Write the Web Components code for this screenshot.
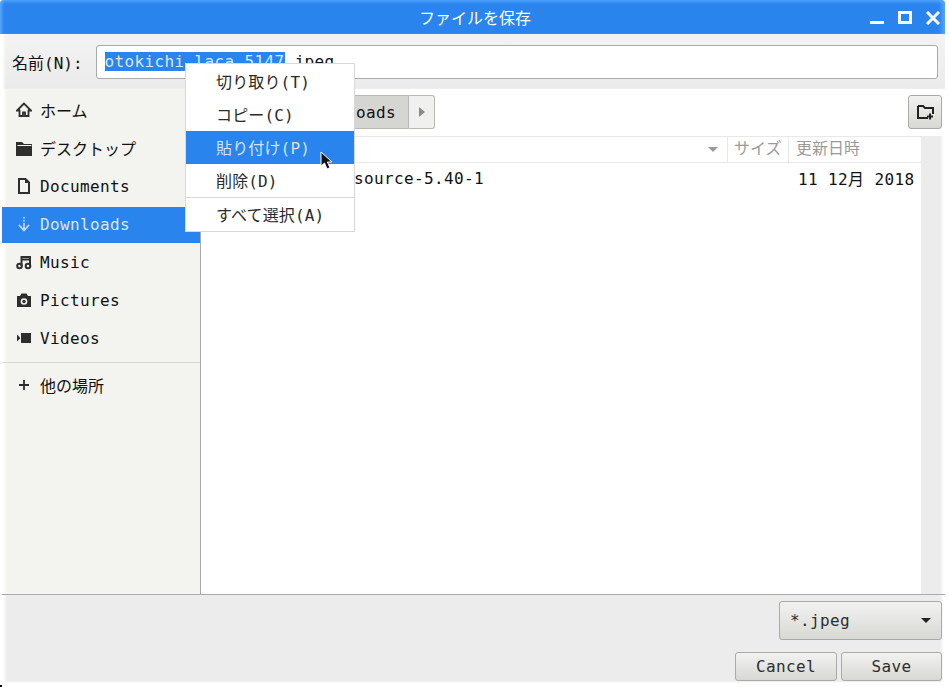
<!doctype html>
<html>
<head>
<meta charset="utf-8">
<style>
  html, body { margin: 0; height: 100%; background: #fff; overflow: hidden; }
  body {
    font-family: "DejaVu Sans Mono", "Noto Sans CJK JP", monospace;
    font-size: 16px;
    color: #111;
  }
  .corner { position: absolute; left: 0; top: 685px; width: 2px; height: 2px; background: #000; }
</style>
</head>
<body>
<save-dialog></save-dialog>
<div class="corner"></div>
<script>
const ICONS = {
  home: '<path d="M8 1.500 1 8.500h2.500V14H7v-3.500h2V14h3.500V8.500H15z" fill="none" stroke="currentColor" stroke-width="1.800"/>',
  folder: '<path d="M0 2h6l2 2h8v12H0z" fill="currentColor"/><path d="M1.500 5.500h14" stroke="#f3f3ef" stroke-width="1"/>',
  doc: '<path d="M3 1h6.500L13 4.500V15H3z" fill="none" stroke="currentColor" stroke-width="2"/><path d="M9 1v4h4" fill="currentColor"/>',
  down: '<path d="M8 1v1.500M8 4v1.500M8 7v6M3 9l5 5.500L13 9" fill="none" stroke="currentColor" stroke-width="1.600"/>',
  music: '<circle cx="3.500" cy="12" r="2.300" fill="none" stroke="currentColor" stroke-width="2"/><circle cx="12" cy="12" r="2.300" fill="none" stroke="currentColor" stroke-width="2"/><path d="M5.500 12V3h8.500v9M5.500 5.500H14" fill="none" stroke="currentColor" stroke-width="2"/>',
  camera: '<path d="M1 4h3l1.500-2.500h5L12 4h3v11H1z" fill="currentColor"/><circle cx="8" cy="9.500" r="3.300" fill="#f3f3ef"/><circle cx="8" cy="9.500" r="1.700" fill="currentColor"/>',
  video: '<path d="M5 3h10v10H5z" fill="currentColor"/><path d="M1 4.500 4 7.500v1L1 11.500z" fill="currentColor"/>',
  plus: '<path d="M8 3v10M3 8h10" fill="none" stroke="currentColor" stroke-width="1.800"/>'
};

class SideItem extends HTMLElement {
  constructor() {
    super();
    this.attachShadow({ mode: "open" });
    this.shadowRoot.innerHTML = `
      <style>
        :host { display: flex; align-items: center; height: 38px; padding-left: 14px; gap: 8px; color: #111; }
        :host([active]) { background: linear-gradient(180deg, transparent 2px, #2a84ee 2px); color: #d6e8fc; }
        svg { width: 16px; height: 16px; flex: none; color: #2e2e2e; }
        :host([active]) svg { color: #c9e0fb; }
      </style>
      <svg viewBox="0 0 16 16">${ICONS[this.getAttribute("icon")] || ""}</svg>
      <slot></slot>
    `;
  }
}
customElements.define("side-item", SideItem);

class SideBar extends HTMLElement {
  constructor() {
    super();
    this.attachShadow({ mode: "open" });
    this.shadowRoot.innerHTML = `
      <style>
        :host { display: block; width: 198px; flex: none; padding-top: 2px; background: #f3f3ef; border-right: 1px solid #a9a9a9; box-shadow: inset 4px 0 3px -1px #fff; }
        hr { border: 0; border-top: 1px solid #d8d8d5; margin: 5px 0 3px; }
        .l { letter-spacing: 0.37px; }
      </style>
      <side-item icon="home">ホーム</side-item>
      <side-item icon="folder">デスクトップ</side-item>
      <side-item icon="doc" class="l">Documents</side-item>
      <side-item icon="down" class="l" active>Downloads</side-item>
      <side-item icon="music" class="l">Music</side-item>
      <side-item icon="camera" class="l">Pictures</side-item>
      <side-item icon="video" class="l">Videos</side-item>
      <hr>
      <side-item icon="plus">他の場所</side-item>
    `;
  }
}
customElements.define("side-bar", SideBar);

class TitleBar extends HTMLElement {
  constructor() {
    super();
    this.attachShadow({ mode: "open" });
    this.shadowRoot.innerHTML = `
      <style>
        :host {
          display: grid; grid-template-columns: 1fr auto 1fr; align-items: center;
          height: 34px; margin-left: -2px; padding-left: 5px; color: #fff; font-family: "Noto Sans CJK JP", sans-serif; font-size: 16px;
          background: linear-gradient(180deg, #4aa0fa 0, #2a84ee 4px); border-radius: 4px 4px 0 0;
          box-shadow: inset -5px 0 4px -2px #5aa8f8, inset 4px 0 3px -2px #5aa8f8;
        }
        .title { grid-column: 2; }
        .ctl { grid-column: 3; justify-self: end; display: flex; gap: 14px; padding: 2px 5px 0 0; }
        svg { width: 14px; height: 14px; display: block; }
      </style>
      <span class="title"><slot></slot></span>
      <div class="ctl">
        <svg viewBox="0 0 14 14"><path d="M0 11.500h14" stroke="#fff" stroke-width="3"/></svg>
        <svg viewBox="0 0 14 14"><path d="M1.500 1.500h11v10h-11z" fill="none" stroke="#fff" stroke-width="3"/></svg>
        <svg viewBox="0 0 14 14"><path d="M1 1l12 12M13 1 1 13" stroke="#fff" stroke-width="3"/></svg>
      </div>
    `;
  }
}
customElements.define("title-bar", TitleBar);

class NameRow extends HTMLElement {
  constructor() {
    super();
    this.attachShadow({ mode: "open" });
    this.shadowRoot.innerHTML = `
      <style>
        :host { display: flex; align-items: center; gap: 13px; height: 55px; padding: 0 7px 0 10px; background: linear-gradient(180deg, #f3f3f3, #ebebeb); letter-spacing: 0.37px; box-shadow: inset 3px 0 3px -1px #fff; }
        .label { letter-spacing: 0; }
        .entry { flex: 1; height: 34px; box-sizing: border-box; display: flex; align-items: center; padding-left: 8px; background: #fff; border: 1px solid #aaa; border-radius: 3px; }
        .sel { background: #2a84ee; color: #d6e8fc; line-height: 19px; }
      </style>
      <span class="label">名前(N):</span>
      <div class="entry"><span class="sel">otokichi_laca_5147</span>.jpeg</div>
    `;
  }
}
customElements.define("name-row", NameRow);

class PathBar extends HTMLElement {
  constructor() {
    super();
    this.attachShadow({ mode: "open" });
    this.shadowRoot.innerHTML = `
      <style>
        :host { display: flex; align-items: flex-start; justify-content: space-between; height: 47px; box-sizing: border-box; padding: 6px 3px 0 0; letter-spacing: 0.37px; }
        .crumbs { display: flex; height: 34px; }
        .seg { width: 208px; box-sizing: border-box; display: flex; align-items: center; justify-content: flex-end; padding-right: 12px; background: #d5d5d1; border: 1px solid #b8b8b4; border-radius: 3px 0 0 3px; }
        .arrow { width: 26px; box-sizing: border-box; display: flex; align-items: center; justify-content: center; border: 1px solid #b8b8b4; border-left: 0; border-radius: 0 3px 3px 0; background: #f0f0ee; }
        .arrow i { border-left: 6px solid #8a8a8a; border-top: 5px solid transparent; border-bottom: 5px solid transparent; }
        .new { width: 34px; height: 34px; box-sizing: border-box; display: flex; align-items: center; justify-content: center; border: 1px solid #aaa; border-radius: 3px; background: linear-gradient(180deg, #f2f2f0, #d8d8d5); }
        svg { width: 17px; height: 17px; }
      </style>
      <div class="crumbs"><div class="seg">Downloads</div><div class="arrow"><i></i></div></div>
      <div class="new"><svg viewBox="0 0 17 17"><path d="M1 2h5l2 2h8v6M11 14H1V2" fill="none" stroke="#222" stroke-width="2"/><path d="M13 9.500v6M10 12.500h6" stroke="#222" stroke-width="2"/></svg></div>
    `;
  }
}
customElements.define("path-bar", PathBar);

class FileList extends HTMLElement {
  constructor() {
    super();
    this.attachShadow({ mode: "open" });
    this.shadowRoot.innerHTML = `
      <style>
        :host { display: flex; flex: 1; min-height: 0; background: #fff; letter-spacing: 0.37px; }
        .list { flex: 1; min-width: 0; }
        .gutter { width: 24px; flex: none; background: #ececec; box-shadow: inset -5px 0 3px -2px #fff; }
        .head, .row { display: grid; grid-template-columns: 1fr 61px 133px; }
        .head { height: 27px; box-sizing: border-box; border-top: 1px solid #e8e8e8; border-bottom: 1px solid #e8e8e8; color: #9a9a9a; letter-spacing: 0; line-height: 24px; }
        .head > div { border-left: 1px solid #e8e8e8; padding-left: 6px; }
        .head > div + div + div { padding-left: 7px; }
        .head > div:first-child { border-left: 0; display: flex; justify-content: flex-end; align-items: center; padding-right: 9px; }
        .head i { border-top: 5px solid #9a9a9a; border-left: 5px solid transparent; border-right: 5px solid transparent; }
        .row { height: 30px; align-items: center; }
        .name { padding-left: 153px; }
        .date { padding-left: 10px; white-space: pre; grid-column: 3; }
      </style>
      <div class="list">
        <div class="head"><div><i></i></div><div>サイズ</div><div>更新日時</div></div>
        <div class="row"><div class="name">source-5.40-1</div><div></div><div class="date">11 12月 2018</div></div>
      </div>
      <div class="gutter"></div>
    `;
  }
}
customElements.define("file-list", FileList);

class DlgButton extends HTMLElement {
  constructor() {
    super();
    this.attachShadow({ mode: "open" });
    this.shadowRoot.innerHTML = `
      <style>
        :host { display: flex; align-items: center; justify-content: center; box-sizing: border-box; height: 29px; width: 102px; color: #2e2e2e; border: 1px solid #aaa; border-radius: 3px; background: linear-gradient(180deg, #f2f2f0, #d8d8d5); letter-spacing: 0.37px; }
      </style>
      <slot></slot>
    `;
  }
}
customElements.define("dlg-button", DlgButton);

class FooterBar extends HTMLElement {
  constructor() {
    super();
    this.attachShadow({ mode: "open" });
    this.shadowRoot.innerHTML = `
      <style>
        :host { display: flex; flex-direction: column; align-items: flex-end; gap: 12px; height: 89px; box-sizing: border-box; padding: 6px 3px 0 0; background: #ececec; border-top: 1px solid #a9a9a9; box-shadow: inset 4px 0 3px -1px #fff, inset -5px 0 3px -2px #fff, inset 0 -2px 2px -1px #fff; }
        .combo { width: 163px; height: 39px; box-sizing: border-box; display: flex; align-items: center; justify-content: space-between; padding: 0 10px; border: 1px solid #aaa; border-radius: 3px; background: linear-gradient(180deg, #f2f2f0, #d8d8d5); color: #2e2e2e; letter-spacing: 0.37px; }
        .combo i { border-top: 5px solid #222; border-left: 5px solid transparent; border-right: 5px solid transparent; }
        .btns { display: flex; gap: 4px; }
      </style>
      <div class="combo"><span>*.jpeg</span><i></i></div>
      <div class="btns"><dlg-button>Cancel</dlg-button><dlg-button style="width:101px">Save</dlg-button></div>
    `;
  }
}
customElements.define("footer-bar", FooterBar);

class PopupMenu extends HTMLElement {
  constructor() {
    super();
    this.attachShadow({ mode: "open" });
    this.shadowRoot.innerHTML = `
      <style>
        :host { position: absolute; left: 183px; top: 63px; width: 170px; box-sizing: border-box; background: #fff; border: 1px solid #d8d8d8; padding-top: 1px; letter-spacing: 0.15px; }
        div { height: 33px; box-sizing: border-box; padding: 0 0 2px 30px; display: flex; align-items: center; color: #2a2a2a; }
        .on { background: #2a84ee; color: #cfe3fb; }
        hr { border: 0; border-top: 1px solid #d8d8d8; margin: 0; }
      </style>
      <div>切り取り(T)</div>
      <div>コピー(C)</div>
      <div class="on">貼り付け(P)</div>
      <div>削除(D)</div>
      <hr>
      <div>すべて選択(A)</div>
    `;
  }
}
customElements.define("popup-menu", PopupMenu);

class SaveDialog extends HTMLElement {
  constructor() {
    super();
    this.attachShadow({ mode: "open" });
    this.shadowRoot.innerHTML = `
      <style>
        :host { display: flex; flex-direction: column; position: relative; width: 943px; height: 683px; margin-left: 2px; background: #fff; }
        .main { flex: 1; display: flex; min-height: 0; }
        .right { flex: 1; display: flex; flex-direction: column; min-width: 0; }
        .cursor { position: absolute; left: 318px; top: 151px; width: 13px; height: 20px; }
      </style>
      <title-bar>ファイルを保存</title-bar>
      <name-row></name-row>
      <div class="main">
        <side-bar></side-bar>
        <div class="right"><path-bar></path-bar><file-list></file-list></div>
      </div>
      <footer-bar></footer-bar>
      <popup-menu></popup-menu>
      <svg class="cursor" viewBox="0 0 13 20"><path d="M1 1v14l3.500-3 2.500 6 3-1.300-2.600-5.700H12z" fill="#111" stroke="#fff"/></svg>
    `;
  }
}
customElements.define("save-dialog", SaveDialog);
</script>
</body>
</html>
